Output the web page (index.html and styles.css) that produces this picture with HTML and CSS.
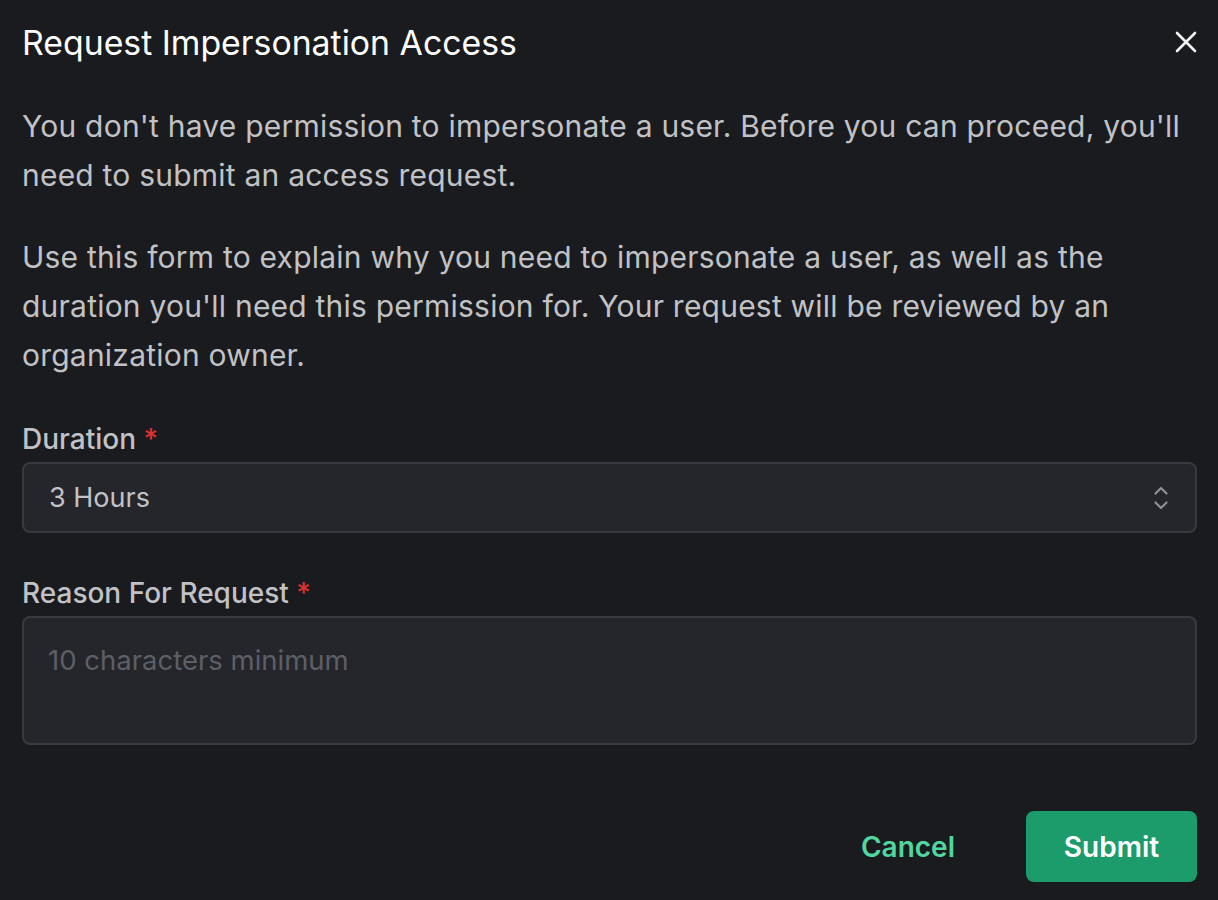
FILE: index.html
```html
<!DOCTYPE html>
<html lang="en">
<head>
<meta charset="utf-8">
<title>Request Impersonation Access</title>
<link rel="stylesheet" href="styles.css">
</head>
<body>
<div class="modal">
  <header class="modal-header">
    <h2 class="modal-title">Request Impersonation Access</h2>
    <button class="close-btn" aria-label="Close">
      <svg width="22" height="22" viewBox="0 0 22 22" fill="none" stroke="#f2f2f2" stroke-width="2.6" stroke-linecap="round"><path d="M2 2L20 20M20 2L2 20"/></svg>
    </button>
  </header>
  <p class="text">You don't have permission to impersonate a user. Before you can proceed, you'll need to submit an access request.</p>
  <p class="text">Use this form to explain why you need to impersonate a user, as well as the duration you'll need this permission for. Your request will be reviewed by an organization owner.</p>
  <div class="field">
    <label class="label">Duration <span class="req">*</span></label>
    <div class="select">
      <span class="select-value">3 Hours</span>
      <svg class="chevrons" width="16" height="24" viewBox="0 0 16 24" fill="none" stroke="#8e9096" stroke-width="2.2" stroke-linecap="round" stroke-linejoin="round"><path d="M2.5 7.5L8 2L13.5 7.5M2.5 16.5L8 22L13.5 16.5"/></svg>
    </div>
  </div>
  <div class="field field-reason">
    <label class="label">Reason For Request <span class="req">*</span></label>
    <div class="textarea"><span class="placeholder">10 characters minimum</span></div>
  </div>
  <footer class="actions">
    <button class="btn-cancel">Cancel</button>
    <button class="btn-submit">Submit</button>
  </footer>
</div>
</body>
</html>
```
FILE: styles.css
```css
html, body {
  margin: 0;
  padding: 0;
  background: #1a1b1e;
}
body {
  font-family: Inter, "Noto Sans", sans-serif;
  color: #c1c2c5;
}
.modal {
  padding: 0 21px 0 22px;
  box-sizing: border-box;
  width: 1218px;
}
.modal-header {
  display: flex;
  align-items: center;
  justify-content: space-between;
  height: 84px;
}
.modal-title {
  margin: 0;
  font-size: 33.8px;
  font-weight: 400;
  color: #ffffff;
}
.close-btn {
  background: none;
  border: 0;
  padding: 0;
  margin-right: 0;
  display: flex;
  cursor: pointer;
}
.text {
  margin: 18px 0 0;
  font-size: 30px;
  line-height: 49px;
  letter-spacing: 0.22px;
  color: #c1c2c5;
}
.text + .text {
  margin-top: 33px;
}
.field {
  margin-top: 40px;
}
.field-reason {
  margin-top: 41px;
}
.label {
  display: block;
  font-size: 28px;
  font-weight: 500;
  line-height: 38px;
  color: #c1c2c5;
  margin-bottom: 4px;
}
.req {
  color: #e03131;
}
.select {
  display: flex;
  align-items: center;
  justify-content: space-between;
  height: 71px;
  box-sizing: border-box;
  border: 2px solid #373a40;
  border-radius: 8px;
  background: #25262b;
  padding: 0 26px 0 25px;
}
.select-value {
  font-size: 27px;
  color: #c1c2c5;
}
.textarea {
  height: 129px;
  box-sizing: border-box;
  border: 2px solid #373a40;
  border-radius: 8px;
  background: #25262b;
  padding: 26px 24px;
}
.placeholder {
  font-size: 27.5px;
  color: #5c5f66;
  line-height: 32px;
}
.actions {
  display: flex;
  justify-content: flex-end;
  align-items: center;
  gap: 71px;
  margin-top: 66px;
}
.btn-cancel {
  background: none;
  border: 0;
  font-family: inherit;
  font-size: 28px;
  font-weight: 600;
  color: #51d69e;
  padding: 0;
}
.btn-submit {
  font-family: inherit;
  font-size: 28px;
  font-weight: 600;
  color: #ffffff;
  background: #1b9c6a;
  border: 0;
  border-radius: 8px;
  height: 71px;
  width: 171px;
}
```
